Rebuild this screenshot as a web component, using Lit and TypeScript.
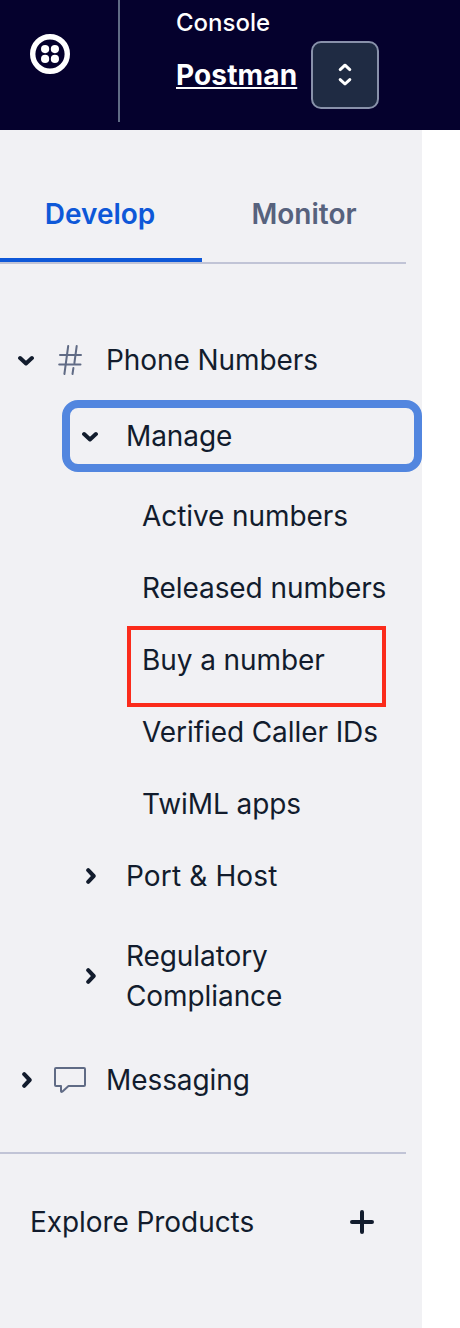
import { LitElement, html, css, svg } from "lit";
import { customElement } from "lit/decorators.js";

const chevronDown = html`<svg class="chev" width="16" height="12" viewBox="0 0 16 12">
  <path d="M2.1 4.1 8 9.4 13.9 4.1" />
</svg>`;
const chevronRight = html`<svg class="chev" width="10" height="16" viewBox="0 0 10 16">
  <path d="M2.2 2.2 7.7 8 2.2 13.8" />
</svg>`;
const dot = (x: number, y: number) => svg`<circle cx=${x} cy=${y} r="4.1" fill="#fff" />`;

@customElement("app-root")
export class AppRoot extends LitElement {
  static styles = css`
    :host {
      display: block;
      width: 460px;
      height: 1328px;
      overflow: hidden;
      background: #fff;
      color: #121c2d;
      font: 400 28px/40px Inter, sans-serif;
      white-space: nowrap;
    }
    * { box-sizing: border-box; }
    svg { display: block; flex: none; }
    .top { display: flex; height: 130px; background: #05012d; color: #fff; }
    .brand { width: 120px; height: 122px; padding: 34px 0 0 30px; border-right: 2px solid #606b85; }
    .account { padding: 2px 0 0 56px; }
    .console { height: 39px; font-size: 24px; font-weight: 500; line-height: 41px; }
    .project { display: flex; align-items: center; gap: 14px; }
    .name { letter-spacing: 0.14px; font-weight: 700; text-decoration: underline; text-decoration-thickness: 2px; text-underline-offset: 2px; }
    .switch {
      display: flex; align-items: center; justify-content: center;
      width: 68px; height: 68px; border: 2px solid #8891aa; border-radius: 10px; background: #1f2b43;
    }
    .side { width: 422px; height: 1198px; background: #f1f1f4; }
    .tabs { display: flex; width: 406px; height: 134px; border-bottom: 2px solid #c1c4d6; font-weight: 600; }
    .tab { width: 202px; padding-top: 64px; text-align: center; color: #57627d; }
    .tab.on { padding-right: 2px; border-bottom: 4px solid #0e58d8; color: #0e58d8; }
    .tab:not(.on) { width: 204px; }
    .tree { display: flex; flex-direction: column; padding-top: 60px; letter-spacing: -0.08px; }
    .row { display: flex; align-items: center; height: 72px; }
    .slot { display: flex; justify-content: center; flex: none; }
    .root .slot { width: 52px; }
    .root .icon { width: 54px; padding-right: 18px; }
    .manage { width: 360px; margin: 4px 0 8px 62px; border: 8px solid #5286df; border-radius: 16px; }
    .manage .slot { width: 40px; }
    .manage .label { padding-left: 16px; }
    .leaf { padding-left: 142px; }
    .marked { position: relative; }
    .mark { position: absolute; left: 127px; top: 2px; width: 259px; height: 81px; border: 4px solid #fb2b1b; }
    .branch { padding-left: 76px; }
    .branch .slot { width: 30px; }
    .branch .label { padding-left: 20px; }
    .loose { letter-spacing: 0.14px; }
    .tall { height: 128px; }
    .messaging { margin-top: 4px; }
    .messaging .slot:first-child { padding-left: 2px; }
    .chev path { fill: none; stroke: #121c2d; stroke-width: 4; stroke-linecap: round; stroke-linejoin: round; }
    .chev.light path { stroke: #fff; stroke-width: 3; }
    .line { fill: none; stroke: #606b85; stroke-width: 2; stroke-linecap: round; stroke-linejoin: round; }
    .explore {
      display: flex; align-items: center; justify-content: space-between; letter-spacing: -0.07px;
      width: 406px; height: 138px; margin-top: 36px; padding: 0 32px 0 30px; border-top: 2px solid #c1c4d6;
    }
  `;

  render() {
    const leaf = (t: string) => html`<div class="row leaf">${t}</div>`;
    return html`
      <header class="top">
        <div class="brand">
          <svg width="40" height="40" viewBox="0 0 40 40">
            <circle cx="20" cy="20" r="17.3" fill="none" stroke="#fff" stroke-width="5.4" />
            ${dot(15.1, 15.1)}${dot(24.9, 15.1)}${dot(15.1, 24.9)}${dot(24.9, 24.9)}
          </svg>
        </div>
        <div class="account">
          <div class="console">Console</div>
          <div class="project">
            <span class="name">Postman</span>
            <span class="switch">
              <svg class="chev light" width="14" height="24" viewBox="0 0 14 24">
                <path d="M2.2 6.6 7 2.2 11.8 6.6M2.2 16.600 7 21 11.8 16.600" />
              </svg>
            </span>
          </div>
        </div>
      </header>
      <aside class="side">
        <div class="tabs">
          <div class="tab on">Develop</div>
          <div class="tab">Monitor</div>
        </div>
        <nav class="tree">
          <div class="row root">
            <span class="slot">${chevronDown}</span>
            <span class="slot icon">
              <svg width="26" height="32" viewBox="0 0 26 32">
                <path class="line" d="M11.2 2 7.400 30M19.700 2l-2.300 17M16.400 24 15.500 30M3 11h21M2.200 20.400h21.300" />
              </svg>
            </span>
            <span>Phone Numbers</span>
          </div>
          <div class="row manage">
            <span class="slot">${chevronDown}</span>
            <span class="label">Manage</span>
          </div>
          ${leaf("Active numbers")} ${leaf("Released numbers")}
          <div class="row leaf marked">Buy a number<span class="mark"></span></div>
          ${leaf("Verified Caller IDs")} ${leaf("TwiML apps")}
          <div class="row branch">
            <span class="slot">${chevronRight}</span>
            <span class="label loose">Port &amp; Host</span>
          </div>
          <div class="row branch tall">
            <span class="slot">${chevronRight}</span>
            <span class="label">Regulatory<br />Compliance</span>
          </div>
          <div class="row root messaging">
            <span class="slot">${chevronRight}</span>
            <span class="slot icon">
              <svg width="34" height="28" viewBox="0 0 34 28">
                <path class="line" d="M3 2h28q1 0 1 1v16q0 1-1 1H15.5l-6 5.5Q8 26.500 8 25v-5H3q-1 0-1-1V3q0-1 1-1Z" />
              </svg>
            </span>
            <span>Messaging</span>
          </div>
        </nav>
        <div class="explore">
          <span>Explore Products</span>
          <svg class="chev" width="24" height="24" viewBox="0 0 24 24"><path d="M12 2v20M2 12h20" /></svg>
        </div>
      </aside>
    `;
  }
}
